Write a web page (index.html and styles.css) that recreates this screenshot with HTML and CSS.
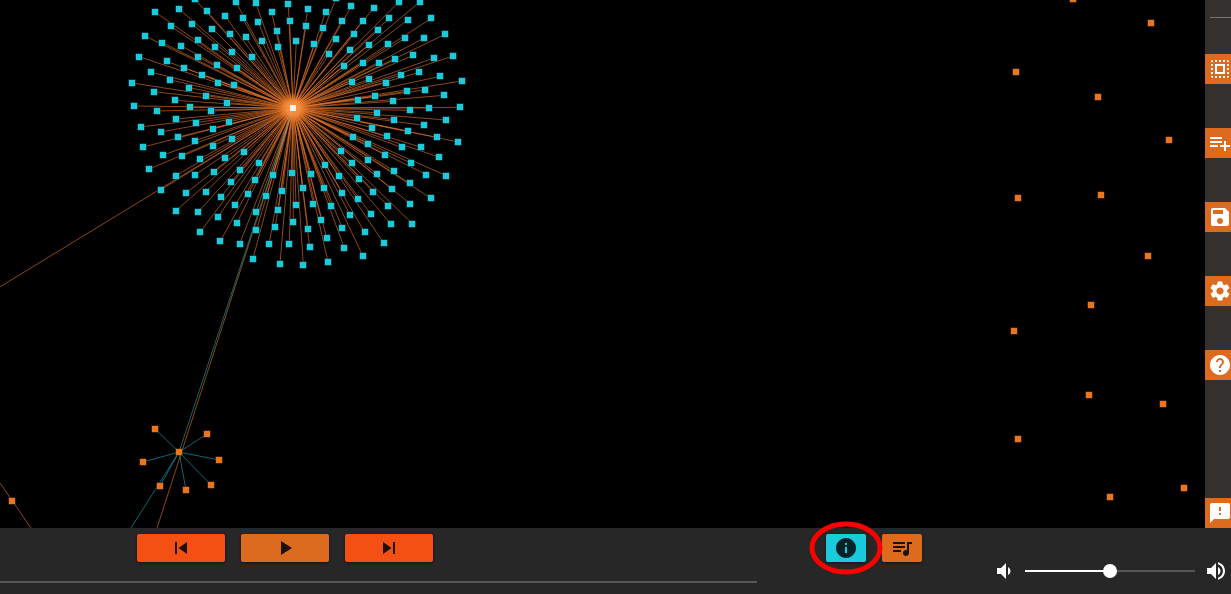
FILE: index.html
```html
<!DOCTYPE html>
<html>

<head>
    <title>Graph player</title>
    <link rel="stylesheet" href="styles.css">
</head>

<body>
    <div class="app">
        <div class="top">
            <svg id="graph" class="graph" width="1205" height="528">
                <defs>
                    <radialGradient id="hubGlow">
                        <stop offset="0" stop-color="#fb9a48"/>
                        <stop offset="0.45" stop-color="#f58d3f" stop-opacity="0.85"/>
                        <stop offset="1" stop-color="#dc6b1f" stop-opacity="0"/>
                    </radialGradient>
                </defs>
            </svg>
            <div class="sidebar">
                <div class="side-rule"></div>
                <button class="side-btn"><svg viewBox="0 0 24 24"><path d="M3 5h2V3c-1.1 0-2 .9-2 2zm0 8h2v-2H3v2zm4 8h2v-2H7v2zM3 9h2V7H3v2zm10-6h-2v2h2V3zm6 0v2h2c0-1.1-.9-2-2-2zM5 21v-2H3c0 1.1.9 2 2 2zm-2-4h2v-2H3v2zM9 3H7v2h2V3zm2 18h2v-2h-2v2zm8-8h2v-2h-2v2zm0 8c1.1 0 2-.9 2-2h-2v2zm0-12h2V7h-2v2zm0 8h2v-2h-2v2zm-4 4h2v-2h-2v2zm0-16h2V3h-2v2zM7 17h10V7H7v10zm2-8h6v6H9V9z"/></svg></button>
                <button class="side-btn"><svg viewBox="0 0 24 24"><path d="M14 10H2v2h12v-2zm0-4H2v2h12V6zm4 8v-4h-2v4h-4v2h4v4h2v-4h4v-2h-4zM2 16h8v-2H2v2z"/></svg></button>
                <button class="side-btn"><svg viewBox="0 0 24 24"><path d="M17 3H5c-1.11 0-2 .9-2 2v14c0 1.1.89 2 2 2h14c1.1 0 2-.9 2-2V7l-4-4zm-5 16c-1.66 0-3-1.34-3-3s1.34-3 3-3 3 1.34 3 3-1.34 3-3 3zm3-10H5V5h10v4z"/></svg></button>
                <button class="side-btn"><svg viewBox="0 0 24 24"><path d="M19.14 12.94c.04-.3.06-.61.06-.94 0-.32-.02-.64-.07-.94l2.03-1.58c.18-.14.23-.41.12-.61l-1.92-3.32c-.12-.22-.37-.29-.59-.22l-2.39.96c-.5-.38-1.03-.7-1.62-.94l-.36-2.54c-.04-.24-.24-.41-.48-.41h-3.84c-.24 0-.43.17-.47.41l-.36 2.54c-.59.24-1.13.57-1.62.94l-2.39-.96c-.22-.08-.47 0-.59.22L2.74 8.87c-.12.21-.08.47.12.61l2.03 1.58c-.05.3-.09.63-.09.94s.02.64.07.94l-2.03 1.58c-.18.14-.23.41-.12.61l1.92 3.32c.12.22.37.29.59.22l2.39-.96c.5.38 1.03.7 1.62.94l.36 2.54c.05.24.24.41.48.41h3.84c.24 0 .44-.17.47-.41l.36-2.54c.59-.24 1.13-.56 1.62-.94l2.39.96c.22.08.47 0 .59-.22l1.92-3.32c.12-.22.07-.47-.12-.61l-2.01-1.58zM12 15.6c-1.98 0-3.6-1.62-3.6-3.6s1.62-3.6 3.6-3.6 3.6 1.62 3.6 3.6-1.62 3.6-3.6 3.6z"/></svg></button>
                <button class="side-btn"><svg viewBox="0 0 24 24"><path d="M12 2C6.48 2 2 6.48 2 12s4.48 10 10 10 10-4.48 10-10S17.52 2 12 2zm1 17h-2v-2h2v2zm2.07-7.75l-.9.92C13.45 12.9 13 13.5 13 15h-2v-.5c0-1.1.45-2.1 1.17-2.83l1.24-1.26c.37-.36.59-.86.59-1.41 0-1.1-.9-2-2-2s-2 .9-2 2H8c0-2.21 1.79-4 4-4s4 1.79 4 4c0 .88-.36 1.68-.93 2.25z"/></svg></button>
                <button class="side-btn side-last"><svg viewBox="0 0 24 24"><path d="M20 2H4c-1.1 0-1.99.9-1.99 2L2 22l4-4h14c1.1 0 2-.9 2-2V4c0-1.1-.9-2-2-2zm-7 12h-2v-2h2v2zm0-4h-2V6h2v4z"/></svg></button>
            </div>
        </div>
        <div class="player">
            <div class="transport">
                <div class="transport-btns">
                    <button class="btn btn-hot"><svg viewBox="0 0 24 24"><path d="M6 6h2v12H6zm3.5 6l8.5 6V6z"/></svg></button>
                    <button class="btn btn-orange"><svg viewBox="0 0 24 24"><path d="M8 5v14l11-7z"/></svg></button>
                    <button class="btn btn-hot"><svg viewBox="0 0 24 24"><path d="M6 18l8.5-6L6 6v12zM16 6v12h2V6h-2z"/></svg></button>
                </div>
                <div class="seek"></div>
            </div>
            <div class="modes">
                <button class="mode mode-info"><svg viewBox="0 0 24 24"><path d="M12 2C6.48 2 2 6.48 2 12s4.48 10 10 10 10-4.48 10-10S17.52 2 12 2zm1 15h-2v-6h2v6zm0-8h-2V7h2v2z"/></svg></button>
                <button class="mode btn-orange"><svg viewBox="0 0 24 24"><path d="M15 6H3v2h12V6zm0 4H3v2h12v-2zM3 16h8v-2H3v2zM17 6v8.18c-.31-.11-.65-.18-1-.18-1.66 0-3 1.34-3 3s1.34 3 3 3 3-1.34 3-3V8h3V6h-5z"/></svg></button>
                <svg class="highlight" width="80" height="60"><ellipse cx="40" cy="30" rx="34" ry="24"/></svg>
            </div>
            <div class="volume">
                <svg class="vol-icon" viewBox="0 0 24 24"><path d="M18.5 12c0-1.77-1.02-3.29-2.5-4.03v8.05c1.48-.73 2.5-2.25 2.5-4.02zM5 9v6h4l5 5V4L9 9H5z"/></svg>
                <div class="vol-track">
                    <div class="vol-fill"></div>
                    <div class="vol-thumb"></div>
                </div>
                <svg class="vol-icon" viewBox="0 0 24 24"><path d="M3 9v6h4l5 5V4L7 9H3zm13.5 3c0-1.77-1.02-3.29-2.5-4.03v8.05c1.48-.73 2.5-2.25 2.5-4.02zM14 3.23v2.06c2.89.86 5 3.54 5 6.71s-2.11 5.85-5 6.71v2.06c4.01-.91 7-4.49 7-8.77 0-4.28-2.99-7.86-7-8.77z"/></svg>
            </div>
        </div>
    </div>
    <script src="graph.js"></script>
</body>

</html>
```

FILE: styles.css
```css
html,
body {
    margin: 0;
    background-color: #000;
}

.app {
    width: 1231px;
    height: 594px;
    overflow: hidden;
}

.top {
    display: flex;
    height: 528px;
}

.graph {
    display: block;
    flex: none;
}

.graph .edge {
    stroke-width: 1;
}

.edge-orange {
    stroke: #e8762a;
    opacity: 0.6;
}

.edge-teal {
    stroke: #1ccbdb;
    opacity: 0.5;
}

.node-cyan,
.node-orange {
    stroke-width: 1;
    paint-order: stroke;
}

.node-cyan {
    fill: #1ccbdb;
    stroke: #0f6068;
}

.node-orange {
    fill: #e8751f;
    stroke: #6e3610;
}

.node-center {
    fill: #f4f4f4;
}

/* right tool column */
.sidebar {
    display: flex;
    flex-direction: column;
    gap: 44px;
    width: 26px;
    background-color: #33302d;
}

.side-rule {
    height: 1px;
    margin: 17px 0 -8px 5px;
    background-color: #77736f;
}

.side-btn {
    flex: none;
    display: block;
    height: 30px;
    padding: 3px 0 3px 3px;
    border: none;
    background-color: #dc6b1f;
    overflow: hidden;
}

.side-btn svg {
    display: block;
    width: 24px;
    height: 24px;
    fill: #fff;
}

.side-last {
    margin-top: auto;
}

/* bottom player bar */
.player {
    display: flex;
    height: 66px;
    background-color: #272727;
}

.transport {
    width: 757px;
    padding-top: 6px;
}

.transport-btns {
    display: flex;
    gap: 16px;
    padding-left: 137px;
}

.btn {
    width: 88px;
    height: 28px;
    padding: 2px 0;
    border: none;
    border-radius: 2px;
    box-shadow: 0 1px 3px rgba(0, 0, 0, 0.5);
}

.btn svg,
.mode svg {
    display: block;
    width: 24px;
    height: 24px;
    margin: auto;
    fill: #1f1008;
}

.btn-hot {
    background-color: #f55014;
}

.btn-orange {
    background-color: #dc6b1f;
}

.seek {
    height: 2px;
    margin-top: 19px;
    background-color: #555;
}

.modes {
    position: relative;
    display: flex;
    gap: 16px;
    padding: 6px 0 0 69px;
}

.mode {
    width: 40px;
    height: 28px;
    padding: 2px 0;
    border: none;
    border-radius: 2px;
    box-shadow: 0 1px 3px rgba(0, 0, 0, 0.5);
}

.mode-info {
    background-color: #1ccbdb;
}

.mode-info svg {
    fill: #04222a;
}

.highlight {
    position: absolute;
    left: 49px;
    top: -10px;
    overflow: visible;
}

.highlight ellipse {
    fill: none;
    stroke: #f00;
    stroke-width: 5;
}

.volume {
    display: flex;
    align-items: center;
    gap: 9px;
    margin-left: auto;
    padding: 0 3px 11px 0;
    align-self: flex-end;
}

.vol-icon {
    display: block;
    width: 24px;
    height: 24px;
    fill: #fff;
}

.vol-track {
    position: relative;
    width: 170px;
    height: 2px;
    background-color: #555;
}

.vol-fill {
    width: 85px;
    height: 2px;
    background-color: #fff;
}

.vol-thumb {
    position: absolute;
    left: 78px;
    top: -6px;
    width: 14px;
    height: 14px;
    border-radius: 50%;
    background-color: #fff;
}
```

FILE: graph.js
```js
var svg = document.getElementById("graph");
var NS = "http://www.w3.org/2000/svg";

// hub of the big star
var hub = [293, 108];

// leaves of the big star, measured at 3x from x=120
var leaves = [
    [225, -2], [348, 6], [407, 8], [505, 13], [563, 27], [617, 35], [648, -5], [694, 19], [761, 24], [837, 5], [899, 6],
    [105, 36], [177, 27], [261, 34], [315, 48], [368, 55], [415, 67], [455, 36], [509, 63], [558, 77], [609, 85], [666, 62], [728, 63], [808, 54], [864, 59], [934, 55],
    [152, 79], [216, 72], [277, 86], [329, 101], [377, 112], [471, 92], [425, 122], [529, 122], [582, 133], [648, 116], [702, 103], [775, 90], [855, 115], [912, 114], [975, 103],
    [75, 108], [127, 128], [183, 137], [234, 121], [284, 141], [336, 156], [396, 170], [473, 142], [628, 162], [691, 150], [747, 135], [805, 132], [879, 166], [942, 174], [1000, 168],
    [57, 170], [140, 184], [235, 171], [292, 195], [352, 205], [193, 204], [672, 198], [728, 188], [778, 190], [826, 178], [843, 225], [898, 217], [961, 229], [1025, 243],
    [92, 216], [151, 240], [246, 226], [294, 249], [341, 255], [206, 263], [697, 245], [746, 238], [798, 248], [861, 274], [914, 270], [971, 286],
    [37, 249], [102, 275], [258, 287], [164, 301], [321, 308], [211, 322], [715, 300], [766, 288], [818, 304], [870, 331], [927, 324], [1021, 322],
    [42, 318], [110, 333], [272, 333], [168, 357], [229, 368], [327, 365], [278, 386], [712, 355], [771, 338], [821, 359], [912, 376], [979, 360],
    [62, 381], [122, 396], [175, 411], [225, 422], [336, 418], [757, 383], [863, 393], [802, 409], [698, 410], [952, 412], [1014, 426],
    [70, 441], [130, 465], [186, 469], [279, 437], [241, 476], [372, 455], [315, 474], [743, 431], [845, 442], [904, 442], [663, 454], [796, 465], [957, 471],
    [88, 507], [167, 527], [225, 525], [282, 517], [360, 509], [417, 490], [333, 547], [406, 541], [460, 524], [516, 520], [573, 522], [616, 494], [695, 490], [744, 479], [872, 489], [657, 527], [770, 521], [822, 513], [919, 524], [979, 527],
    [123, 569], [198, 580], [257, 575], [302, 591], [384, 583], [439, 589], [487, 573], [548, 565], [611, 563], [667, 578], [716, 537], [759, 575], [816, 568], [869, 550], [933, 595],
    [168, 632], [235, 635], [294, 651], [346, 615], [408, 635], [475, 630], [528, 614], [580, 611], [634, 618], [713, 597], [804, 618], [870, 611],
    [240, 697], [351, 669], [466, 680], [520, 666], [604, 659], [690, 644], [752, 642], [813, 673], [877, 671],
    [301, 724], [359, 731], [409, 691], [447, 733], [508, 731], [564, 688], [620, 714], [667, 684], [734, 697], [791, 729],
    [399, 776], [480, 791], [550, 796], [569, 742], [624, 785], [673, 744], [728, 767]
];

// small star at the bottom left
var smallHub = [179, 452];
var smallLeaves = [[155, 429], [207, 434], [219, 460], [143, 462], [160, 486], [186, 490], [211, 485]];

// loose nodes on the right
var loose = [
    [1073, -1], [1151, 23], [1016, 72], [1098, 97], [1169, 140], [1018, 198], [1101, 195], [1148, 256],
    [1091, 305], [1014, 331], [1089, 395], [1163, 404], [1018, 439], [1110, 497], [1184, 488], [12, 501]
];

function addLine(a, b, cls) {
    var line = document.createElementNS(NS, "line");
    line.setAttribute("x1", a[0]);
    line.setAttribute("y1", a[1]);
    line.setAttribute("x2", b[0]);
    line.setAttribute("y2", b[1]);
    line.setAttribute("class", "edge " + cls);
    svg.appendChild(line);
}

// rects are snapped to whole pixels so they stay crisp
function addNode(p, size, cls) {
    var rect = document.createElementNS(NS, "rect");
    rect.setAttribute("x", Math.round(p[0] - size / 2));
    rect.setAttribute("y", Math.round(p[1] - size / 2));
    rect.setAttribute("width", size);
    rect.setAttribute("height", size);
    rect.setAttribute("class", cls);
    svg.appendChild(rect);
}

var points = leaves.map(function(p) {
    return [120 + p[0] / 3, p[1] / 3];
});

points.forEach(function(p) {
    addLine(hub, p, "edge-orange");
});
addLine(hub, [-2, 288], "edge-orange");
addLine(hub, [157, 528], "edge-orange");
addLine(hub, smallHub, "edge-teal");
addLine(smallHub, [131, 528], "edge-teal");
addLine([0, 483], [31, 528], "edge-orange");

smallLeaves.forEach(function(p) {
    addLine(smallHub, p, "edge-teal");
});

// soft bright spot where the spokes meet
var glow = document.createElementNS(NS, "circle");
glow.setAttribute("cx", hub[0]);
glow.setAttribute("cy", hub[1]);
glow.setAttribute("r", 16);
glow.setAttribute("fill", "url(#hubGlow)");
svg.appendChild(glow);

points.forEach(function(p) {
    addNode(p, 6, "node-cyan");
});
smallLeaves.concat(loose).forEach(function(p) {
    addNode(p, 6, "node-orange");
});
addNode(smallHub, 6, "node-orange");
addNode(hub, 6, "node-center");
```
